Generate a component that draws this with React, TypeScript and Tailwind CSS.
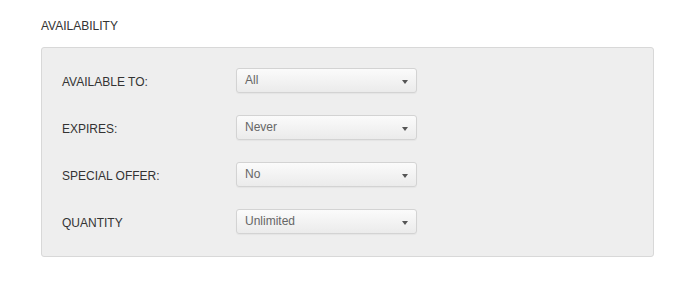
import React from 'react';

const rows = [
  { label: 'AVAILABLE TO:', value: 'All' },
  { label: 'EXPIRES:', value: 'Never' },
  { label: 'SPECIAL OFFER:', value: 'No' },
  { label: 'QUANTITY', value: 'Unlimited' },
];

function FakeSelect({ value }: { value: string }) {
  return (
    <div className="relative flex h-[25px] w-[181px] items-center rounded-[3px] border border-[#d3d3d3] bg-gradient-to-b from-[#fbfbfb] to-[#ebebeb] pl-[8px] text-[12px] text-[#666] shadow-[0_1px_1px_rgba(0,0,0,0.04)]">
      <span className="pb-[1px]">{value}</span>
      <span className="absolute right-[8px] top-[11px] h-0 w-0 border-x-[3.5px] border-t-[4px] border-x-transparent border-t-[#555]" />
    </div>
  );
}

export default function App() {
  return (
    <div className="h-[289px] w-[692px] bg-white font-['Liberation_Sans',Arial,sans-serif]">
      <div className="px-[41px] pt-[18px]">
        <h2 className="text-[12px] leading-[16px] text-[#333]">AVAILABILITY</h2>
        <div className="mt-[13px] w-[613px] rounded-[3px] border border-[#d8d8d8] bg-[#eeeeee] px-[20px] pb-[22px] pt-[20px]">
          <div className="flex flex-col gap-[22px]">
            {rows.map((r) => (
              <div key={r.label} className="flex items-center">
                <div className="w-[174px] pt-[2px] text-[12px] text-[#333]">{r.label}</div>
                <FakeSelect value={r.value} />
              </div>
            ))}
          </div>
        </div>
      </div>
    </div>
  );
}
